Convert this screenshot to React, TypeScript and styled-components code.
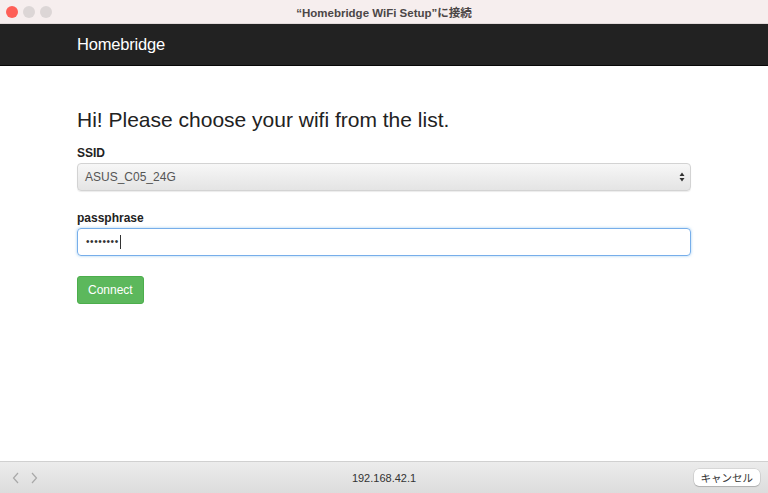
import React from "react";
import styled, { createGlobalStyle } from "styled-components";

const Global = createGlobalStyle`
  html, body {
    margin: 0;
    padding: 0;
    background: #fff;
  }
  body {
    font-family: "Liberation Sans", Arial, sans-serif;
  }
`;

const Window = styled.div`
  width: 768px;
  height: 493px;
  display: flex;
  flex-direction: column;
  background: #fff;
  overflow: hidden;
`;

const TitleBar = styled.div`
  height: 24px;
  flex-shrink: 0;
  display: grid;
  grid-template-columns: 60px 1fr 60px;
  align-items: center;
  background: #f6eeee;
  border-bottom: 1px solid #e2dada;
  box-sizing: border-box;
`;

const Lights = styled.div`
  display: flex;
  gap: 5px;
  padding-left: 6px;
`;

const Light = styled.span<{ $color: string }>`
  width: 12px;
  height: 12px;
  border-radius: 50%;
  background: ${(p) => p.$color};
`;

const WindowTitle = styled.div`
  text-align: center;
  font-size: 11.5px;
  font-weight: bold;
  color: #4b4646;
  font-family: "Liberation Sans", "Noto Sans CJK JP", sans-serif;
`;

const Navbar = styled.div`
  height: 42px;
  flex-shrink: 0;
  background: #222;
  border-bottom: 1px solid #080808;
  box-sizing: border-box;
  display: flex;
  align-items: center;
  padding-left: 77px;
`;

const Brand = styled.div`
  color: #fff;
  font-size: 16.5px;
  letter-spacing: -0.2px;
`;

const Main = styled.div`
  flex: 1;
  padding: 41px 77px 0 77px;
`;

const Heading = styled.h3`
  margin: 0 0 13px;
  font-size: 21px;
  font-weight: normal;
  color: #222;
  line-height: 26px;
`;

const Field = styled.div`
  margin-bottom: 20px;
`;

const Label = styled.label`
  display: block;
  font-size: 12px;
  font-weight: bold;
  color: #222;
  margin-bottom: 2px;
  line-height: 15px;
`;

const SelectBox = styled.div`
  height: 28px;
  box-sizing: border-box;
  border: 1px solid #d3d3d3;
  border-radius: 4px;
  background: linear-gradient(#f7f7f7, #e4e4e4);
  box-shadow: 0 1px 1px rgba(0, 0, 0, 0.08);
  display: flex;
  align-items: center;
  justify-content: space-between;
  padding: 0 5px 0 7px;
  font-size: 12px;
  color: #555;
`;

const Input = styled.div`
  height: 28px;
  box-sizing: border-box;
  border: 1px solid #77aeea;
  border-radius: 4px;
  box-shadow: 0 0 3px rgba(102, 175, 233, 0.6);
  display: flex;
  align-items: center;
  padding: 0 8px;
  font-size: 12px;
  color: #333;
`;

const Dots = styled.span`
  letter-spacing: 0.6px;
  font-size: 10px;
  line-height: 1;
`;

const Caret = styled.span`
  width: 1px;
  height: 14px;
  background: #333;
  margin-left: 1px;
`;

const Button = styled.button`
  height: 28px;
  padding: 0 10px;
  border: 1px solid #4cae4c;
  border-radius: 3px;
  background: #5cb85c;
  color: #fff;
  font-family: "Liberation Sans", Arial, sans-serif;
  font-size: 12px;
`;

const BottomBar = styled.div`
  height: 32px;
  flex-shrink: 0;
  background: linear-gradient(#ececec, #dcdcdc);
  border-top: 1px solid #d0d0d0;
  box-sizing: border-box;
  display: grid;
  grid-template-columns: 120px 1fr 120px;
  align-items: center;
`;

const Arrows = styled.div`
  display: flex;
  gap: 10px;
  padding-left: 12px;
  color: #a8a8a8;
`;

const Url = styled.div`
  text-align: center;
  font-size: 11px;
  color: #333;
`;

const Cancel = styled.div`
  justify-self: end;
  margin-right: 8px;
  background: #fff;
  border-radius: 5px;
  box-shadow: 0 0 0 0.5px rgba(0, 0, 0, 0.15), 0 1px 1px rgba(0, 0, 0, 0.15);
  padding: 1px 7px;
  font-size: 10.5px;
  color: #333;
  font-family: "Noto Sans CJK JP", sans-serif;
`;

const Chevron = ({ dir }: { dir: "l" | "r" }) => (
  <svg width="8" height="12" viewBox="0 0 8 12">
    <path
      d={dir === "l" ? "M6 1 L1.5 6 L6 11" : "M2 1 L6.5 6 L2 11"}
      fill="none"
      stroke="currentColor"
      strokeWidth="1.2"
    />
  </svg>
);

const UpDown = () => (
  <svg width="6" height="10" viewBox="0 0 6 10">
    <path d="M3 0.5 L5.5 4 H0.5 Z M3 9.5 L5.5 6 H0.5 Z" fill="#333" />
  </svg>
);

export default function App() {
  return (
    <Window>
      <Global />
      <TitleBar>
        <Lights>
          <Light $color="#fe5f57" />
          <Light $color="#dcd6d6" />
          <Light $color="#dcd6d6" />
        </Lights>
        <WindowTitle>“Homebridge WiFi Setup”に接続</WindowTitle>
        <div />
      </TitleBar>
      <Navbar>
        <Brand>Homebridge</Brand>
      </Navbar>
      <Main>
        <Heading>Hi! Please choose your wifi from the list.</Heading>
        <Field>
          <Label>SSID</Label>
          <SelectBox>
            <span>ASUS_C05_24G</span>
            <UpDown />
          </SelectBox>
        </Field>
        <Field>
          <Label>passphrase</Label>
          <Input>
            <Dots>••••••••</Dots>
            <Caret />
          </Input>
        </Field>
        <Button>Connect</Button>
      </Main>
      <BottomBar>
        <Arrows>
          <Chevron dir="l" />
          <Chevron dir="r" />
        </Arrows>
        <Url>192.168.42.1</Url>
        <Cancel>キャンセル</Cancel>
      </BottomBar>
    </Window>
  );
}
